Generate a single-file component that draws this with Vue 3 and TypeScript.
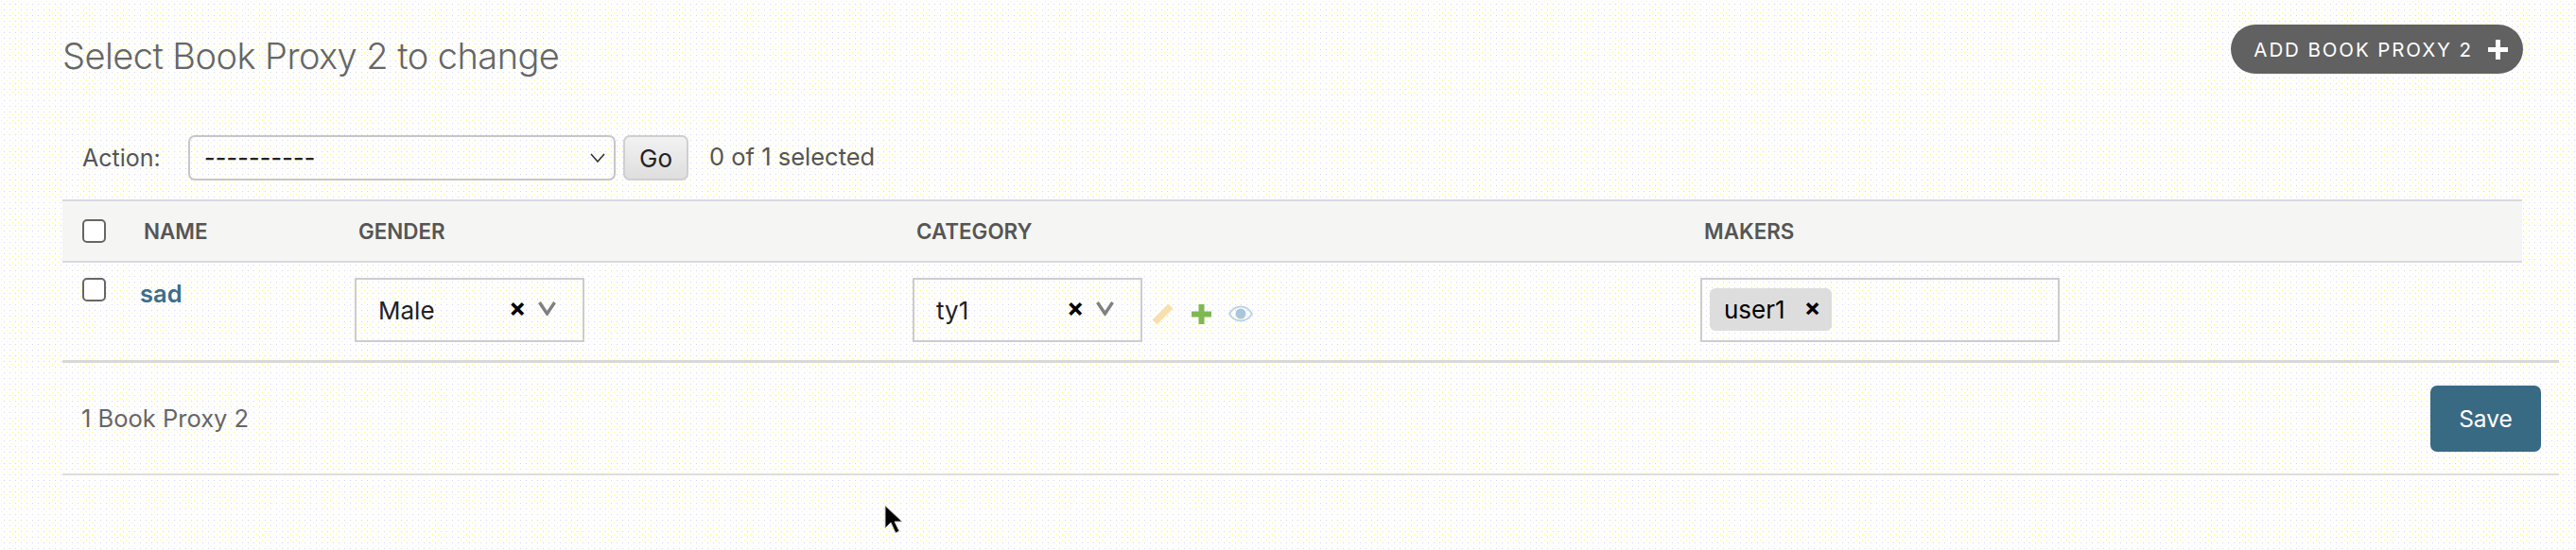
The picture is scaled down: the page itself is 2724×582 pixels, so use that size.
<script setup lang="ts">
import { ref } from 'vue'

const action = ref('')
const listCount = 1
const selected = ref(0)
</script>

<template>
  <div class="page">
    <div class="title-row">
      <h1 class="title">Select Book Proxy 2 to change</h1>
      <a class="add-btn">
        <span>ADD BOOK PROXY 2</span>
        <svg class="add-plus" width="21" height="21" viewBox="0 0 21 21">
          <path fill="#fff" d="M8 0h5v8h8v5h-8v8H8v-8H0V8h8z" />
        </svg>
      </a>
    </div>

    <div class="actions">
      <label class="action-label">Action:</label>
      <div class="select-box">
        <span class="select-value">{{ action || '----------' }}</span>
        <svg width="16" height="10" viewBox="0 0 16 10">
          <path d="M1 1l7 8 7-8" fill="none" stroke="#333" stroke-width="1.6" />
        </svg>
      </div>
      <button class="go-btn">Go</button>
      <span class="counter">{{ selected }} of {{ listCount }} selected</span>
    </div>

    <div class="table">
      <div class="thead">
        <div class="cell-check"><span class="checkbox"></span></div>
        <div class="cell-name">NAME</div>
        <div class="cell-gender">GENDER</div>
        <div class="cell-category">CATEGORY</div>
        <div class="cell-makers">MAKERS</div>
      </div>
      <div class="tbody">
        <div class="cell-check"><span class="checkbox"></span></div>
        <div class="cell-name"><a class="row-link">sad</a></div>
        <div class="cell-gender">
          <div class="single-select">
            <span class="value">Male</span>
            <span class="clear">×</span>
            <svg class="chev" width="19" height="15" viewBox="0 0 19 15">
              <path d="M1.5 1l8 12 8-12" fill="none" stroke="#808080" stroke-width="3.4" />
            </svg>
          </div>
        </div>
        <div class="cell-category">
          <div class="single-select">
            <span class="value">ty1</span>
            <span class="clear">×</span>
            <svg class="chev" width="19" height="15" viewBox="0 0 19 15">
              <path d="M1.5 1l8 12 8-12" fill="none" stroke="#808080" stroke-width="3.4" />
            </svg>
          </div>
          <div class="related">
            <svg width="24" height="24" viewBox="0 0 24 24">
              <path d="M3 21L20 4" fill="none" stroke="#f8dfae" stroke-width="7" />
            </svg>
            <svg width="21" height="21" viewBox="0 0 21 21">
              <path fill="#7fb852" d="M7.5 0h6v7.5H21v6h-7.5V21h-6v-7.5H0v-6h7.5z" />
            </svg>
            <svg width="26" height="18" viewBox="0 0 26 18">
              <path d="M1 9c6-10 18-10 24 0-6 10-18 10-24 0z" fill="none" stroke="#bdd5e6" stroke-width="2" />
              <circle cx="13" cy="9" r="5.5" fill="#a9c6dc" />
            </svg>
          </div>
        </div>
        <div class="cell-makers">
          <div class="multi-select">
            <span class="chip">user1<span class="chip-x">×</span></span>
          </div>
        </div>
      </div>
    </div>

    <div class="paginator">
      <span>{{ listCount }} Book Proxy 2</span>
      <button class="save-btn">Save</button>
    </div>

    <svg class="cursor" width="22" height="32" viewBox="0 0 22 32">
      <path d="M1 1v24l6-6 5 11 4-2-5-10h8z" fill="#000" stroke="#ccc" stroke-width="1" />
    </svg>
  </div>
</template>

<style>
html,
body {
  margin: 0;
  background: #fff;
}
</style>

<style scoped>
.page {
  position: relative;
  width: 2724px;
  height: 582px;
  box-sizing: border-box;
  overflow: hidden;
  padding: 26px 18px 0 66px;
  font-family: Inter, "Liberation Sans", sans-serif;
  color: #666;
  background-color: #fff;
  background-image:
    radial-gradient(circle at 1.5px 1.5px, #ffff88 0.7px, transparent 0.8px),
    radial-gradient(circle at 4.5px 4.5px, #d4d4fa 0.7px, transparent 0.8px);
  background-size: 6px 6px;
}

.title-row {
  display: flex;
  justify-content: space-between;
  align-items: flex-start;
  height: 117px;
  padding-right: 38px;
}

.title {
  margin: 11px 0 0;
  font-size: 38px;
  line-height: 44px;
  font-weight: 300;
  letter-spacing: -0.55px;
  color: #666;
}

.add-btn {
  display: flex;
  align-items: center;
  gap: 16px;
  height: 52px;
  padding: 0 16px 0 24px;
  box-sizing: border-box;
  border-radius: 26px;
  background: #616161;
  color: #fff;
  font-size: 20.5px;
  font-weight: 400;
  letter-spacing: 1.9px;
  white-space: nowrap;
}

.add-plus {
  flex: none;
}

.actions {
  display: flex;
  align-items: center;
  height: 48px;
  padding-left: 21px;
  font-size: 25px;
}

.action-label {
  width: 112px;
  color: #555;
}

.select-box {
  display: flex;
  align-items: center;
  justify-content: space-between;
  width: 452px;
  height: 48px;
  box-sizing: border-box;
  padding: 0 9px 0 15px;
  border: 2px solid #c6c6c6;
  border-radius: 7px;
  color: #222;
}

.select-value {
  font-weight: 500;
  letter-spacing: 0.2px;
}

.go-btn {
  width: 69px;
  height: 48px;
  margin-left: 8px;
  padding: 0;
  font: inherit;
  font-size: 26px;
  color: #222;
  background: linear-gradient(#f2f2f2, #dedede);
  border: 2px solid #cfcfcf;
  border-radius: 7px;
}

.counter {
  margin: -3px 0 0 22px;
  font-size: 25.5px;
  color: #555;
}

.table {
  margin-top: 20px;
  width: 2601px;
}

.thead,
.tbody {
  display: grid;
  grid-template-columns: 82px 227px 590px 833px 1fr;
}

.thead {
  align-items: center;
  height: 67px;
  box-sizing: border-box;
  border-top: 2px solid #d8d8e0;
  border-bottom: 2px solid #d8d8e0;
  background: #f5f5f3;
  font-size: 22.4px;
  font-weight: 600;
  color: #555;
}

.tbody {
  height: 103px;
  box-sizing: border-box;
  padding-top: 16px;
}

.thead .cell-name,
.thead .cell-gender,
.thead .cell-category,
.thead .cell-makers {
  padding-left: 4px;
}

.cell-check {
  padding-left: 21px;
  display: flex;
}

.checkbox {
  display: block;
  width: 25px;
  height: 25px;
  box-sizing: border-box;
  background: #fff;
  border: 2px solid #666;
  border-radius: 5px;
}

.row-link {
  display: block;
  margin-top: 1px;
  font-size: 25.5px;
  font-weight: 600;
  color: #3b6f8a;
}

.cell-category {
  display: flex;
  align-items: flex-start;
}

.single-select {
  display: flex;
  align-items: center;
  width: 243px;
  height: 68px;
  box-sizing: border-box;
  padding-left: 23px;
  border: 2px solid #ccc;
  color: #222;
  font-size: 26px;
}

.value {
  width: 138px;
}

.clear {
  width: 31px;
  margin-top: -5px;
  font-size: 27px;
  font-weight: 700;
  color: #000;
}

.chev {
  margin-top: -3px;
}

.related {
  display: flex;
  align-items: center;
  gap: 18px;
  height: 68px;
  margin: 4px 0 0 10px;
}

.multi-select {
  width: 380px;
  height: 68px;
  box-sizing: border-box;
  padding: 9px 8px;
  border: 2px solid #ccc;
}

.chip {
  display: inline-flex;
  align-items: center;
  width: 129px;
  height: 45px;
  box-sizing: border-box;
  padding-left: 15px;
  background: #ddd;
  border-radius: 6px;
  color: #000;
  font-size: 26px;
}

.chip-x {
  margin: -5px 0 0 20px;
  font-size: 26px;
  font-weight: 700;
}

.paginator {
  display: flex;
  align-items: center;
  justify-content: space-between;
  width: 2640px;
  height: 122px;
  box-sizing: border-box;
  padding: 0 19px 0 20px;
  border-top: 3px solid #d8d8d8;
  border-bottom: 2px solid #ddd;
  font-size: 25.5px;
  color: #666;
}

.save-btn {
  width: 117px;
  height: 70px;
  padding: 0;
  font: inherit;
  font-size: 24.5px;
  color: #fff;
  background: #396a84;
  border: 0;
  border-radius: 7px;
}

.cursor {
  position: absolute;
  left: 935px;
  top: 534px;
}
</style>
